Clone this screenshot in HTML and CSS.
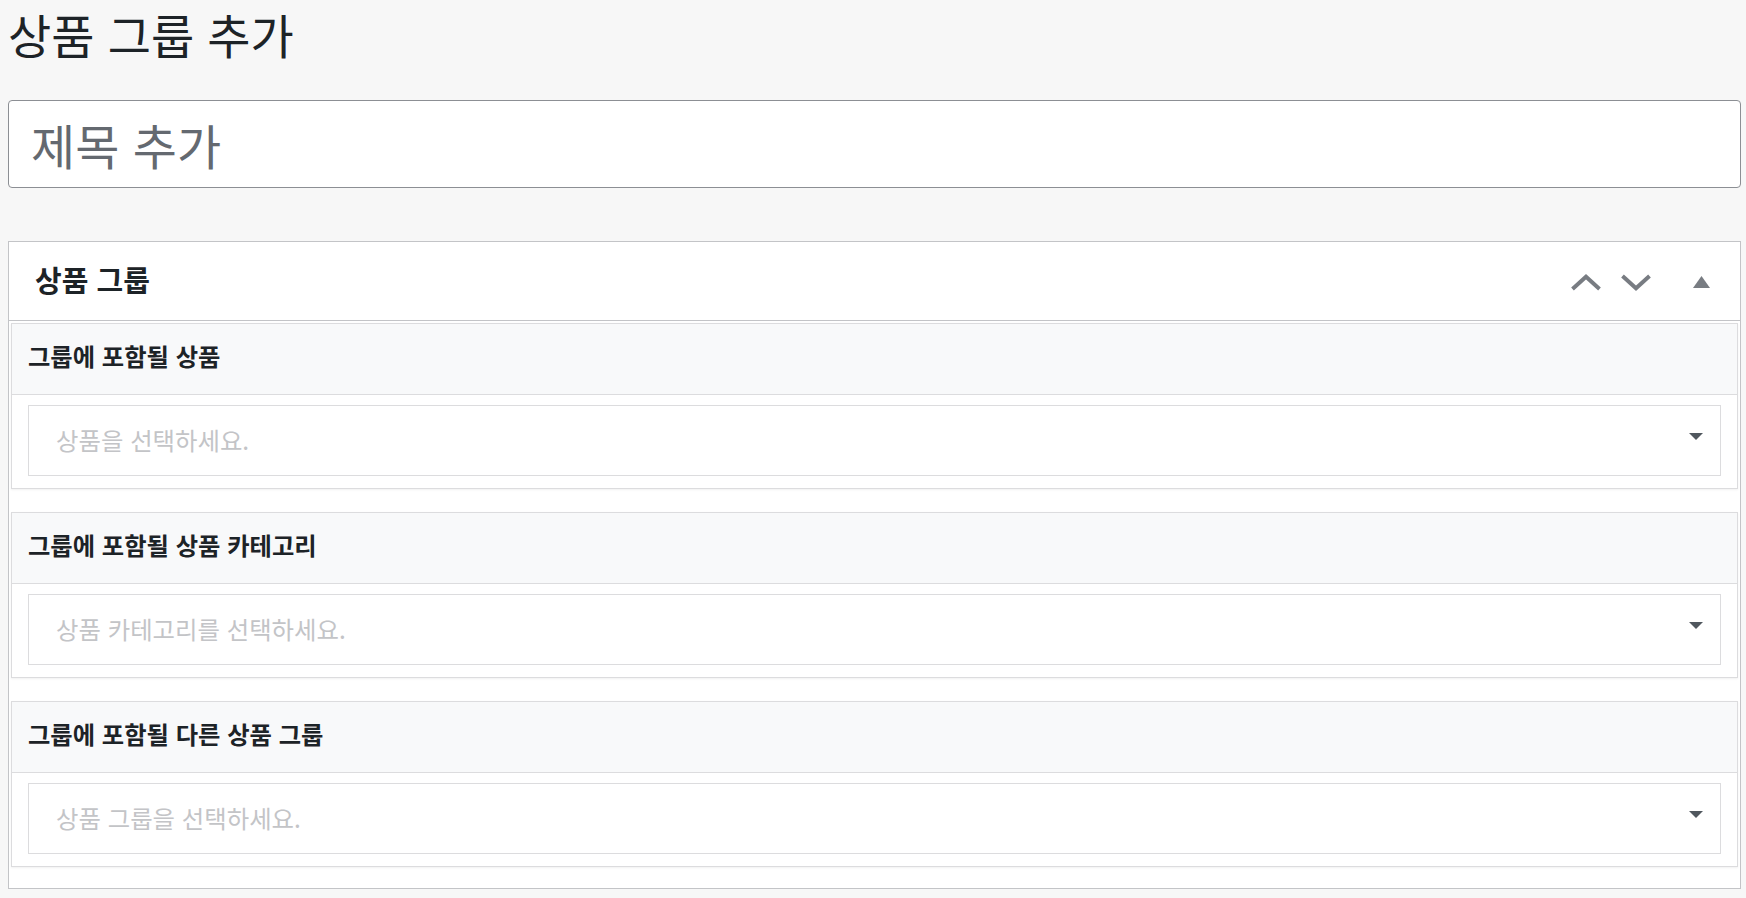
FILE: index.html
```html
<!DOCTYPE html>
<html lang="ko">
<head>
<meta charset="utf-8">
<title>상품 그룹 추가</title>
<link rel="stylesheet" href="styles.css">
</head>
<body>
<div class="wrap">
  <h1 class="page-title">상품 그룹 추가</h1>
  <div class="title-input"><span class="title-placeholder">제목 추가</span></div>

  <div class="panel">
    <div class="panel-header">
      <h2 class="panel-title">상품 그룹</h2>
      <div class="panel-actions">
        <svg class="chev" width="30" height="17" viewBox="0 0 30 17"><polyline points="1.5,15 15,2.8 28.5,15" fill="none" stroke="#787c82" stroke-width="4"/></svg>
        <svg class="chev" width="30" height="17" viewBox="0 0 30 17"><polyline points="1.5,2 15,14.2 28.5,2" fill="none" stroke="#787c82" stroke-width="4"/></svg>
        <svg class="tri" width="17" height="12" viewBox="0 0 17 12"><polygon points="0,12 8.5,0 17,12" fill="#787c82"/></svg>
      </div>
    </div>
    <div class="panel-body">
      <div class="section">
        <div class="section-header">그룹에 포함될 상품</div>
        <div class="section-body">
          <div class="select"><span class="placeholder">상품을 선택하세요.</span><svg class="arrow" width="14" height="7" viewBox="0 0 14 7"><polygon points="0,0 14,0 7,7" fill="#50575e"/></svg></div>
        </div>
      </div>
      <div class="section">
        <div class="section-header">그룹에 포함될 상품 카테고리</div>
        <div class="section-body">
          <div class="select"><span class="placeholder">상품 카테고리를 선택하세요.</span><svg class="arrow" width="14" height="7" viewBox="0 0 14 7"><polygon points="0,0 14,0 7,7" fill="#50575e"/></svg></div>
        </div>
      </div>
      <div class="section">
        <div class="section-header">그룹에 포함될 다른 상품 그룹</div>
        <div class="section-body">
          <div class="select"><span class="placeholder">상품 그룹을 선택하세요.</span><svg class="arrow" width="14" height="7" viewBox="0 0 14 7"><polygon points="0,0 14,0 7,7" fill="#50575e"/></svg></div>
        </div>
      </div>
    </div>
  </div>
</div>
</body>
</html>
```
FILE: styles.css
```css
html, body {
  margin: 0;
  padding: 0;
}
body {
  background: #f7f7f7;
  font-family: "Noto Sans CJK KR", "Noto Sans", sans-serif;
  color: #1d2327;
}
.wrap {
  padding: 0 5px 0 8px;
}
.page-title {
  margin: 2px 0 0 0;
  font-size: 47px;
  font-weight: 400;
  line-height: 64px;
  color: #1d2327;
}
.title-input {
  margin-top: 34px;
  height: 88px;
  box-sizing: border-box;
  border: 1px solid #8c8f94;
  border-radius: 4px;
  background: #fff;
  display: flex;
  align-items: center;
  padding-left: 22px;
}
.title-placeholder {
  font-size: 48px;
  line-height: 64px;
  color: #646970;
}
.panel {
  margin-top: 53px;
  border: 1px solid #c3c4c7;
  background: #fff;
}
.panel-header {
  height: 78px;
  border-bottom: 1px solid #c3c4c7;
  display: flex;
  align-items: center;
  justify-content: space-between;
  padding: 0 30px 0 26px;
}
.panel-title {
  margin: 0 0 3px 0;
  font-size: 29px;
  font-weight: 700;
  line-height: 1;
}
.panel-actions {
  display: flex;
  align-items: center;
  padding-top: 3px;
}
.chev {
  display: block;
}
.chev + .chev {
  margin-left: 20px;
}
.tri {
  display: block;
  margin-left: 42px;
  margin-top: -2px;
}
.panel-body {
  padding: 2px 2px 21px 2px;
  display: flex;
  flex-direction: column;
  gap: 23px;
}
.section {
  border: 1px solid #dcdcde;
  background: #fff;
  box-shadow: 0 1px 2px rgba(0, 0, 0, 0.06);
}
.section-header {
  height: 71px;
  box-sizing: border-box;
  background: #f8f9fa;
  border-bottom: 1px solid #dcdcde;
  display: flex;
  align-items: center;
  padding: 0 0 8px 16px;
  font-size: 24.3px;
  font-weight: 700;
  color: #1d2327;
}
.section-body {
  padding: 10px 16px 12px 16px;
}
.select {
  height: 71px;
  box-sizing: border-box;
  border: 1px solid #dcdcde;
  display: flex;
  align-items: center;
  justify-content: space-between;
  padding: 0 17px 3px 27px;
}
.placeholder {
  font-size: 24.4px;
  color: #c3c4c7;
}
.arrow {
  display: block;
  margin-top: -5px;
}
```
